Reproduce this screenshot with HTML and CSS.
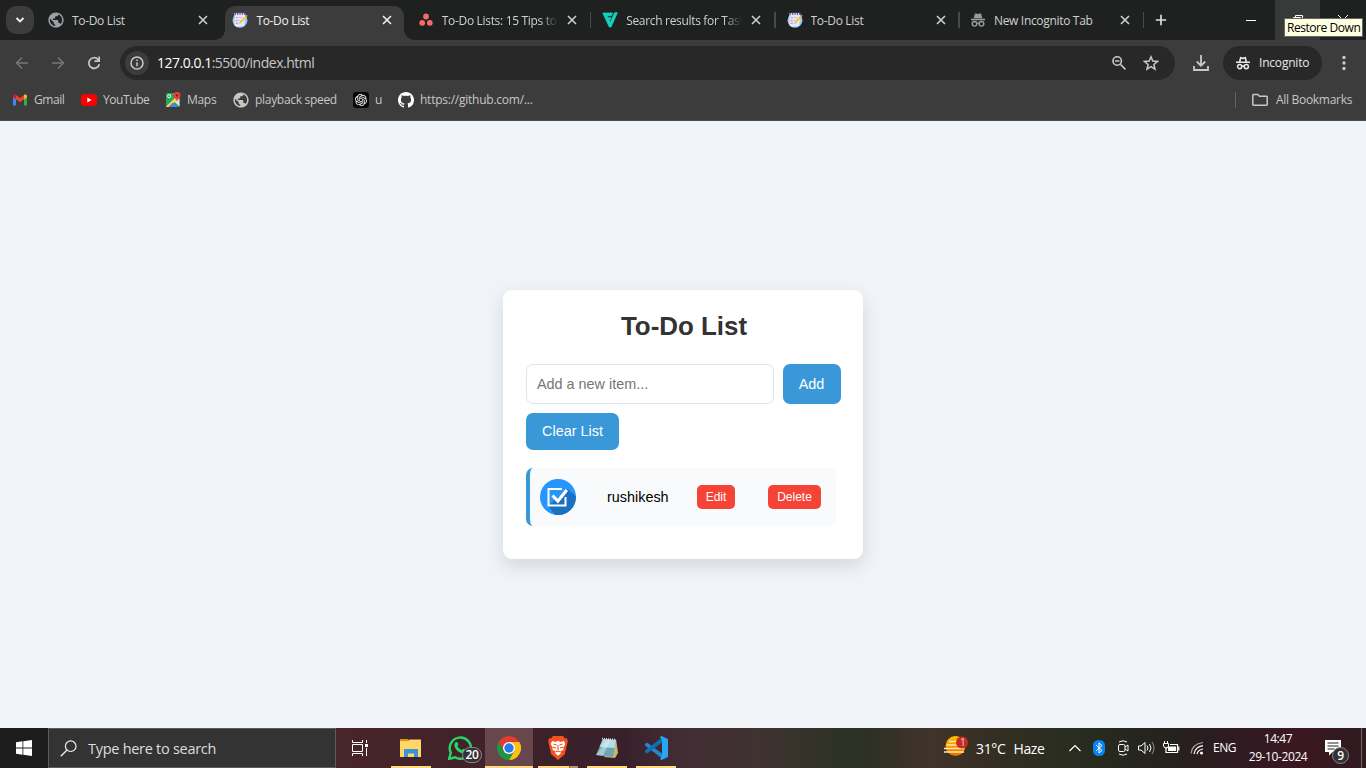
FILE: index.html
```html
<!DOCTYPE html>
<html lang="en">
<head>
<meta charset="utf-8">
<title>To-Do List</title>
<link rel="stylesheet" href="styles.css">
</head>
<body>
<svg class="defs" width="0" height="0">
  <symbol id="x" viewBox="0 0 10 10"><path d="M1 1l8 8M9 1L1 9" stroke="currentColor" stroke-width="1.600" fill="none"/></symbol>
  <symbol id="globe" viewBox="1.500 1.500 21 21"><path fill="currentColor" d="M12 2C6.480 2 2 6.480 2 12s4.480 10 10 10 10-4.480 10-10S17.520 2 12 2zm-1 17.930c-3.950-.49-7-3.850-7-7.930 0-.62.08-1.210.21-1.790L9 15v1c0 1.100.9 2 2 2v1.930zm6.900-2.540c-.26-.81-1-1.390-1.900-1.390h-1v-3c0-.55-.45-1-1-1H8v-2h2c.55 0 1-.45 1-1V7h2c1.100 0 2-.9 2-2v-.41c2.930 1.190 5 4.060 5 7.410 0 2.080-.8 3.970-2.100 5.390z"/></symbol>
  <symbol id="todo" viewBox="0 0 17 17"><circle cx="8.500" cy="8.800" r="7.900" fill="#8fd0fb"/><path d="M3 2h11l-1 12.500L5 16 2.500 14z" fill="#e6e8fb"/><path d="M2.500 1h11.500v2.500H2.500z" fill="#dcdcfa"/><path d="M3.500 0v3M6 0v3M8.500 0v3M11 0v3M13.500 0v3" stroke="#4c3a68" stroke-width="1.100"/><path d="M4 6h2M4 9h2M4 12h2" stroke="#f78ba8" stroke-width="1.500"/><path d="M7 6h4M7 9h2M7 12h2" stroke="#b8bce8"/><path d="M8.500 11.500L15.500 4" stroke="#ffbd20" stroke-width="1.800"/><path d="M14.800 4.700l1.300-1.400" stroke="#ef6d74" stroke-width="1.800"/></symbol>
  <symbol id="spy" viewBox="0 0 16 16"><path d="M5 1.500h1.500L8 2l1.500-.5H11l1.300 4.700H3.700z" fill="currentColor"/><path d="M1 7.500h14" stroke="currentColor" stroke-width="1.600"/><g fill="none" stroke="currentColor" stroke-width="1.400"><circle cx="4.500" cy="11.800" r="2.300"/><circle cx="11.500" cy="11.800" r="2.300"/><path d="M6.800 11.500q1.200-.7 2.400 0"/></g></symbol>
  <symbol id="spyline" viewBox="0 0 16 16"><path d="M4.600 7L5.700 2.700l2.300.6 2.300-.6L11.400 7M1 7.300h14" fill="none" stroke="currentColor" stroke-width="1.600"/><g fill="none" stroke="currentColor" stroke-width="1.500"><circle cx="4.700" cy="11.600" r="2.100"/><circle cx="11.300" cy="11.600" r="2.100"/><path d="M6.800 11.400q1.200-.7 2.400 0"/></g></symbol>
</svg>

<header class="tabstrip">
  <button class="tab-search"><svg width="10" height="10" viewBox="0 0 10 10"><path d="M1.500 3L5 6.500 8.500 3" fill="none" stroke="currentColor" stroke-width="1.900"/></svg></button>
  <nav class="tabs">
    <div class="tab"><svg class="fav dim" viewBox="0 0 16 16"><use href="#globe"/></svg><span class="title">To-Do List</span><svg class="close"><use href="#x"/></svg></div>
    <div class="tab active"><svg class="fav"><use href="#todo"/></svg><span class="title">To-Do List</span><svg class="close"><use href="#x"/></svg></div>
    <div class="tab sep"><svg class="fav asana" viewBox="0 0 16 16"><g fill="#f76969"><circle cx="8" cy="4.500" r="2.900"/><circle cx="4.200" cy="10.800" r="2.900"/><circle cx="11.800" cy="10.800" r="2.900"/></g></svg><span class="title fade tips">To-Do Lists: 15 Tips to</span><svg class="close"><use href="#x"/></svg></div>
    <div class="tab sep"><svg class="fav asana" viewBox="0 0 16 16"><path d="M.8 1h9.700L9.400 3.800H5l1 2h3L8.200 8H7l1.300 2.600L12.500.8h2.900L9 15H7.300z" fill="#13d3bd" stroke="#13d3bd" stroke-width=".8" stroke-linejoin="round"/></svg><span class="title fade">Search results for Task</span><svg class="close"><use href="#x"/></svg></div>
    <div class="tab sep"><svg class="fav asana"><use href="#todo"/></svg><span class="title">To-Do List</span><svg class="close"><use href="#x"/></svg></div>
    <div class="tab sep"><svg class="fav spytab"><use href="#spy"/></svg><span class="title incog">New Incognito Tab</span><svg class="close"><use href="#x"/></svg></div>
  </nav>
  <svg class="plus" width="12" height="12" viewBox="0 0 12 12"><path d="M6 .8v10.400M.8 6h10.400" stroke="currentColor" stroke-width="1.700"/></svg>
  <div class="winctl">
    <span><svg width="10" height="10" viewBox="0 0 10 10"><path d="M0 5.500h10" stroke="#fff"/></svg></span>
    <span class="hover"><svg width="10" height="10" viewBox="0 0 10 10"><path d="M.5 2.500h7v7h-7zM2.500 2V.5h7v7H8" fill="none" stroke="#fff"/></svg></span>
    <span><svg width="10" height="10" viewBox="0 0 10 10"><path d="M0 0l10 10M10 0L0 10" stroke="#fff"/></svg></span>
  </div>
  <div class="tooltip">Restore Down</div>
</header>

<div class="toolbar">
  <svg class="nav off" viewBox="0 0 16 16"><path d="M14 8H3M8 2.500L2.500 8 8 13.500" fill="none" stroke="currentColor" stroke-width="1.500"/></svg>
  <svg class="nav off" viewBox="0 0 16 16"><path d="M2 8h11M8 2.500L13.500 8 8 13.500" fill="none" stroke="currentColor" stroke-width="1.500"/></svg>
  <svg class="nav" viewBox="0 0 16 16"><path d="M13.300 9.200A5.300 5.300 0 1 1 12 4.400L13.500 6" fill="none" stroke="currentColor" stroke-width="1.700"/><path d="M14 1.500V7H8.500V5.300h3.800V1.500z" fill="currentColor"/></svg>
  <div class="omnibox">
    <span class="info"><svg width="14" height="14" viewBox="0 0 14 14"><circle cx="7" cy="7" r="6" fill="none" stroke="currentColor" stroke-width="1.500"/><path d="M7 6.200v4M7 3.500v1.500" stroke="currentColor" stroke-width="1.500"/></svg></span>
    <span class="url"><b>127.0.0.1</b>:5500/index.html</span>
    <svg class="mag" width="16" height="16" viewBox="0 0 16 16"><g fill="none" stroke="currentColor" stroke-width="1.600"><circle cx="6.200" cy="6" r="4.200"/><path d="M4 6h4.400M9.300 9.200l5.200 5.200"/></g></svg>
    <svg class="star" width="16" height="16" viewBox="0 0 16 16"><path d="M8 1.800l1.800 4.300 4.700.4-3.600 3 1.100 4.600L8 11.700l-4 2.400 1.100-4.600-3.600-3 4.700-.4z" fill="none" stroke="currentColor" stroke-width="1.500"/></svg>
  </div>
  <svg class="down" width="18" height="18" viewBox="0 0 18 18"><path d="M9 1v10.500M4.800 7.500L9 11.700l4.200-4.200M2 12v4h14v-4" fill="none" stroke="currentColor" stroke-width="1.800"/></svg>
  <div class="chip"><svg width="16" height="16"><use href="#spyline"/></svg><span>Incognito</span></div>
  <svg class="dots" width="4" height="16" viewBox="0 0 4 16"><g fill="currentColor"><circle cx="2" cy="2.500" r="1.700"/><circle cx="2" cy="8" r="1.700"/><circle cx="2" cy="13.500" r="1.700"/></g></svg>
</div>

<div class="bookmarks">
  <a class="gmail"><svg viewBox="0 0 16 16"><path d="M1 4v9.500h3V6.500z" fill="#4285f4"/><path d="M15 4v9.500h-3V6.500z" fill="#34a853"/><path d="M1 4.500C1 2.500 3 2 4 3v4.500L1 5.300z" fill="#c5221f"/><path d="M4 3l4 3 4-3v4.300l-4 3-4-3z" fill="#ea4335"/><path d="M12 3c1-1 3-.5 3 1.500v.8l-3 2.200z" fill="#fbbc04"/></svg><span>Gmail</span></a>
  <a class="yt"><svg viewBox="0 0 16 16"><rect y="2.300" width="16" height="11.400" rx="3" fill="#f00"/><path d="M6.300 5.500v5l4.300-2.500z" fill="#fff"/></svg><span>YouTube</span></a>
  <a class="maps"><svg viewBox="0 0 16 16"><rect x="1" y="1" width="13.500" height="14" rx="1" fill="#26a65b"/><path d="M8 8.500l6.500 6V7z" fill="#dfe3e8"/><path d="M1 14.500L14 2v4L5 15H1z" fill="#fbd24a"/><path d="M3.500 15L8 10.500l4.800 4.500z" fill="#4285f4"/><circle cx="4.200" cy="4.200" r="1.600" fill="none" stroke="#fff"/><path d="M12 0a3.500 3.500 0 0 1 3.500 3.500C15.500 6 12.500 6.500 12 10c-.5-3.500-3.500-4-3.500-6.500A3.500 3.500 0 0 1 12 0z" fill="#ea4335"/><circle cx="12" cy="3.500" r="1.200" fill="#8d1c16"/></svg><span>Maps</span></a>
  <a class="play"><svg viewBox="0 0 16 16"><use href="#globe"/></svg><span>playback speed</span></a>
  <a class="gpt"><svg viewBox="0 0 16 16"><rect width="16" height="16" rx="3" fill="#080808"/><path transform="translate(2 2) scale(.5)" fill="#f0f0f0" stroke="#f0f0f0" stroke-width=".3" d="M22.2819 9.8211a5.9847 5.9847 0 0 0-.5157-4.9108 6.0462 6.0462 0 0 0-6.5098-2.9A6.0651 6.0651 0 0 0 4.9807 4.1818a5.9847 5.9847 0 0 0-3.9977 2.9 6.0462 6.0462 0 0 0 .7427 7.0966 5.98 5.98 0 0 0 .511 4.9107 6.051 6.051 0 0 0 6.5146 2.9001A5.9847 5.9847 0 0 0 13.2599 24a6.0557 6.0557 0 0 0 5.7718-4.2058 5.9894 5.9894 0 0 0 3.9977-2.9001 6.0557 6.0557 0 0 0-.7475-7.0729zm-9.022 12.6081a4.4755 4.4755 0 0 1-2.8764-1.0408l.1419-.0804 4.7783-2.7582a.7948.7948 0 0 0 .3927-.6813v-6.7369l2.02 1.1686a.071.071 0 0 1 .038.052v5.5826a4.504 4.504 0 0 1-4.4945 4.4944zm-9.6607-4.1254a4.4708 4.4708 0 0 1-.5346-3.0137l.142.0852 4.783 2.7582a.7712.7712 0 0 0 .7806 0l5.8428-3.3685v2.3324a.0804.0804 0 0 1-.0332.0615L9.74 19.9502a4.4992 4.4992 0 0 1-6.1408-1.6464zM2.3408 7.8956a4.485 4.485 0 0 1 2.3655-1.9728V11.6a.7664.7664 0 0 0 .3879.6765l5.8144 3.3543-2.0201 1.1685a.0757.0757 0 0 1-.071 0l-4.8303-2.7865A4.504 4.504 0 0 1 2.3408 7.872zm16.5963 3.8558L13.1038 8.364 15.1192 7.2a.0757.0757 0 0 1 .071 0l4.8303 2.7913a4.4944 4.4944 0 0 1-.6765 8.1042v-5.6772a.79.79 0 0 0-.407-.667zm2.0107-3.0231l-.142-.0852-4.7735-2.7818a.7759.7759 0 0 0-.7854 0L9.409 9.2297V6.8974a.0662.0662 0 0 1 .0284-.0615l4.8303-2.7866a4.4992 4.4992 0 0 1 6.6802 4.66zM8.3065 12.863l-2.02-1.1638a.0804.0804 0 0 1-.038-.0567V6.0742a4.4992 4.4992 0 0 1 7.3757-3.4537l-.142.0805L8.704 5.459a.7948.7948 0 0 0-.3927.6813zm1.0976-2.3654l2.602-1.4998 2.6069 1.4998v2.9994l-2.5974 1.4997-2.6067-1.4997Z"/></svg><span>u</span></a>
  <a class="gh"><svg viewBox="0 0 16 16"><path fill="#fff" d="M8 0C3.580 0 0 3.580 0 8c0 3.540 2.290 6.530 5.470 7.590.4.070.55-.17.55-.38 0-.19-.01-.82-.01-1.490-2.010.37-2.530-.49-2.690-.94-.09-.23-.48-.94-.82-1.130-.28-.15-.68-.52-.01-.53.63-.01 1.080.58 1.230.82.72 1.210 1.870.87 2.330.66.07-.52.28-.87.51-1.070-1.780-.2-3.640-.89-3.640-3.950 0-.87.31-1.590.82-2.150-.08-.2-.36-1.020.08-2.120 0 0 .67-.21 2.200.82.64-.18 1.320-.27 2-.27s1.360.09 2 .27c1.530-1.040 2.200-.82 2.200-.82.44 1.100.16 1.920.08 2.120.51.56.82 1.270.82 2.150 0 3.070-1.870 3.750-3.650 3.950.29.25.54.73.54 1.480 0 1.070-.01 1.930-.01 2.200 0 .21.15.46.55.38A8.010 8.010 0 0 0 16 8c0-4.420-3.580-8-8-8z"/></svg><span>https://github.com/...</span></a>
  <i class="rule"></i>
  <a class="all"><svg viewBox="0 0 16 16"><path d="M.8 12.500v-9.300q0-.7.700-.7h4.300l1.700 1.700h7q.7 0 .7.700v7.600q0 .7-.7.700h-13q-.7 0-.7-.7z" fill="none" stroke="currentColor" stroke-width="1.500"/></svg><span>All Bookmarks</span></a>
</div>

<main class="page">
  <section class="card">
    <h1>To-Do List</h1>
    <div class="entry"><input type="text" placeholder="Add a new item..."><button class="blue">Add</button></div>
    <button class="blue clear">Clear List</button>
    <div class="item">
      <svg width="36" height="36" viewBox="0 0 36 36"><circle cx="18" cy="18" r="18" fill="#2796fc"/><path d="M8 27l7.500 8.900A18 18 0 0 0 35.900 17L27.500 10z" fill="#1b70bf"/><path d="M22 10H8.500v16.500h17V18" fill="none" stroke="#fff" stroke-width="2"/><path d="M12.500 16.500l5.300 5.500 9-11" fill="none" stroke="#fff" stroke-width="3.200"/></svg>
      <span class="task">rushikesh</span>
      <button class="red edit">Edit</button>
      <button class="red">Delete</button>
    </div>
  </section>
</main>

<footer class="taskbar">
  <div class="start"><svg width="16" height="16" viewBox="0 0 16 16"><path d="M0 2.200L6.500 1.300v6.300H0zM7.300 1.200L16 0v7.600H7.300zM0 8.400h6.500v6.300L0 13.800zM7.300 8.400H16V16l-8.700-1.200z" fill="#fff"/></svg></div>
  <div class="search"><svg width="17" height="17" viewBox="0 0 17 17"><circle cx="10.700" cy="6.200" r="5.300" fill="none" stroke="#eee" stroke-width="1.200"/><path d="M7 10L.8 16.200" stroke="#eee" stroke-width="1.300"/></svg><span>Type here to search</span></div>
  <div class="apps">
    <div class="app view"><svg width="16" height="16" viewBox="0 0 16 16"><path d="M.5 0v2.500h10V0M.5 16v-2.500h10V16M.5 4.500h10v7H.5zM14.500 0v3M14.500 8v8" fill="none" stroke="#fff"/><path d="M13 4h3v3h-3z" fill="#fff"/></svg></div>
    <div class="app run"><svg width="24" height="24" viewBox="0 0 24 24"><path d="M1 3h8l2 2h-10z" fill="#d99a13"/><path d="M1 5h8l2-1.500h11V21H1z" fill="#ffd667"/><path d="M5 21v-8h14v8h-4v-3.500H9V21z" fill="#3b93dc"/></svg></div>
    <div class="app"><svg width="24" height="24" viewBox="0 0 24 24"><path d="M1 23l1.800-6.200A10.600 10.600 0 1 1 7 21.300z" fill="none" stroke="#27d468" stroke-width="2.400"/><path d="M8 6c1.500-.5 2 1.200 2.300 2.200.3.800-.7 1.200-.9 1.800.8 1.800 2.200 3.200 4.200 4 .8.200 1.300-1.400 2-1.200 1.200.5 2.700.9 2.300 2-.6 2-2.700 2.700-4.700 2.100C10 16 6.500 12.500 6.300 9c0-1 .6-2.500 1.700-3z" fill="#27d468"/></svg><span class="badge">20</span></div>
    <div class="app chrome run"><svg width="24" height="24" viewBox="0 0 24 24"><path d="M12 0a12 12 0 0 1 10.400 6H12L6.800 15 1.600 6A12 12 0 0 1 12 0z" fill="#e33b2e"/><path d="M22.400 6A12 12 0 0 1 12 24l5.200-9L12 6z" fill="#fbc116"/><path d="M1.600 6A12 12 0 0 0 12 24l5.200-9H6.800z" fill="#229342"/><circle cx="12" cy="12" r="6" fill="#fff"/><circle cx="12" cy="12" r="4.700" fill="#267aee"/></svg></div>
    <div class="app run multi"><svg width="20" height="24" viewBox="0 0 20 24"><path d="M5 0h10l2 2.500 2-.2.800 3.500-.8 3-2.200 9.500L10 24l-6.800-5.700L1 8.800l-.8-3L1 2.300l2 .2z" fill="#f7501d"/><path d="M4 5l3.500 1L10 4.800l2.500 1.200L16 5l1.200 3-2 4 .3 2-3 1.200.5 2-3 2.500-3-2.500.5-2-3-1.200.3-2-2-4z" fill="#fff"/><path d="M5.500 8l3 1M14.500 8l-3 1M10 9v5M7.500 16l2.500-1 2.500 1M5 11l3 1M15 11l-3 1" stroke="#f7501d" stroke-width="1.100" fill="none"/></svg></div>
    <div class="app run"><svg width="24" height="24" viewBox="0 0 24 24"><path d="M21 3l2 14-3 5-11-1z" fill="#d1b36e"/><path d="M8 3l13 1-3 17L1 19z" fill="#6ca6b5"/><path d="M8 3l13 1-1.300 8L4.500 11z" fill="#b3dce4"/><path d="M1 19l12-16 3 .5L8 20z" fill="#e1f3f4" opacity=".45"/><path d="M7 2.500l14 1" stroke="#ddd" stroke-width="1.500" stroke-dasharray="1 1"/></svg></div>
    <div class="app run"><svg width="24" height="24" viewBox="0 0 24 24"><path d="M1 8l2-1.500L18 17.500v5L1 9.500z" fill="#2489ca"/><path d="M1 16l2 1.500L18 6.500v-5L1 14.500z" fill="#1070b3"/><path d="M17.500 0L24 3v18l-6.500 3-1.500-1 2-2V4l-2-3z" fill="#29a5f3"/></svg></div>
  </div>
  <div class="weather"><svg width="26" height="24" viewBox="0 0 26 24"><defs><linearGradient id="sun" x2="0" y2="1"><stop stop-color="#ffc400"/><stop offset="1" stop-color="#ee6c00"/></linearGradient></defs><circle cx="12.500" cy="10" r="10" fill="url(#sun)"/><path d="M6 5.500h9M3.500 9h18M1 12.500h20M1 16h20" stroke="#ffe5ae" stroke-width="1.700"/><circle cx="19" cy="6.500" r="6" fill="#c72c21"/></svg><em>1</em><span class="temp">31°C</span><span>Haze</span></div>
  <div class="tray">
    <svg class="up" width="12" height="8" viewBox="0 0 12 8"><path d="M.5 7L6 1.500 11.500 7" fill="none" stroke="#fff" stroke-width="1.200"/></svg>
    <svg class="bt" width="12" height="16" viewBox="0 0 12 16"><rect width="12" height="16" rx="5.500" fill="#0a84f3"/><path d="M3 5l6 5.500L6 13V3l3 2.500L3 11" fill="none" stroke="#fff"/></svg>
    <svg class="meet" width="12" height="16" viewBox="0 0 12 16"><g fill="none" stroke="#fff"><rect x="1.500" y="4.500" width="6.500" height="7" rx="1.500"/><path d="M8 7l3-2v6l-3-2M2 2q4-2.500 8 0M2 14q4 2.500 8 0"/></g></svg>
    <svg class="vol" width="17" height="14" viewBox="0 0 17 14"><g fill="none" stroke="#fff"><path d="M.5 5v4h2.500l4 3.500v-11L3 5zM9 4.500q2 2.500 0 5M11.500 3q3 4 0 8"/><path d="M14 1q4 6 0 12" opacity=".5"/></g></svg>
    <svg class="bat" width="17" height="14" viewBox="0 0 17 14"><path d="M1.500 0v3M4.500 0v3" stroke="#fff"/><path d="M.5 2.500h5V5L4 7H2L.5 5z" fill="none" stroke="#fff"/><path d="M3 6v5.500h11.500v-8H7M15.800 5.500v4" fill="none" stroke="#fff" stroke-width="1.200"/><path d="M5 5.500h8v4.500H5z" fill="#fff"/></svg>
    <svg class="wifi" width="14" height="14" viewBox="0 0 14 14"><g fill="none" stroke="#fff" stroke-width="1.200"><path d="M1 12.500Q2 3 13 1.500" opacity=".6"/><path d="M4 13Q5 6 13 4.700M7 13.200q.8-4.500 6-5.200"/></g><circle cx="11.500" cy="12" r="1.500" fill="#fff"/></svg>
    <span class="lang">ENG</span>
    <div class="clock"><span>14:47</span><span>29-10-2024</span></div>
    <div class="note"><svg width="16" height="16" viewBox="0 0 16 16"><path d="M0 0h16v12H7.500L4 15.500V12H0z" fill="#fff"/><path d="M2.500 3h11M2.500 6h11M2.500 9h7" stroke="#242021"/></svg><span class="badge nine">9</span></div>
    <i class="peek"></i>
  </div>
</footer>
</body>
</html>
```

FILE: styles.css
```css
* { box-sizing: border-box; }
body { margin: 0; width: 1366px; height: 768px; overflow: hidden; display: flex; flex-direction: column; font: 12px/16px "Open Sans", "Noto Sans", sans-serif; background: #f0f4f8; }
button, input { font-family: inherit; border: 0; padding: 0; }
svg { flex: none; display: block; }
.defs { position: absolute; }

.tabstrip { height: 40px; background: #1f2120; display: flex; align-items: center; position: relative; color: #dedede; flex: none; }
.tab-search { margin-left: 6px; width: 28px; height: 28px; border-radius: 10px; background: #3c3c3c; color: #eee; display: grid; place-items: center; }
.tabs { display: flex; margin-left: 4px; height: 40px; }
.tab { width: 184.400px; height: 40px; display: flex; align-items: center; position: relative; padding-left: 10px; color: #cfd0cf; }
.fav { width: 16px; height: 16px; margin-right: 8px; }
.asana { margin-left: 1px; }
.dim { color: #9aa0a6; }
.spytab { color: #9b9b9b; }
.title { width: 119px; overflow: hidden; white-space: nowrap; letter-spacing: -.32px; padding-top: 1px; }
.title.tips { letter-spacing: -.32px; }
.title.incog { letter-spacing: -.32px; }
.fade { width: 116px; margin-right: 3px; -webkit-mask-image: linear-gradient(90deg, #000 85%, transparent); mask-image: linear-gradient(90deg, #000 85%, transparent); }
.close { width: 10px; height: 10px; margin-left: 7px; }
.asana ~ .close { margin-left: 6px; }
.sep::after { content: ""; position: absolute; right: 0; top: 12px; width: 1.500px; height: 16px; background: #494a49; }
.active { color: #f1f1f1; }
.active::before { content: ""; position: absolute; z-index: 0; left: 2.500px; right: 3px; top: 6px; bottom: 0; background: #3c3c3c; border-radius: 10px 10px 0 0; }
.active > * { position: relative; z-index: 1; }
.active::after { content: ""; position: absolute; left: -7.500px; right: -7px; bottom: 0; height: 10px; background: radial-gradient(circle at 0 0, transparent 9.500px, #3c3c3c 10px) left / 10px 10px no-repeat, radial-gradient(circle at 100% 0, transparent 9.500px, #3c3c3c 10px) right / 10px 10px no-repeat; }
.plus { margin-left: 10.600px; }
.winctl { display: flex; height: 40px; margin-left: auto; }
.winctl span { width: 46px; display: grid; place-items: center; }
.winctl span:first-child { padding-right: 2px; }
.winctl .hover { background: #383939; width: 45px; }
.tooltip { position: absolute; left: 1284px; top: 18px; width: 79px; height: 19px; background: #ffffe1; border: 1px solid #666; color: #000; line-height: 18px; padding-left: 2px; white-space: nowrap; letter-spacing: -.45px; }

.toolbar { height: 40px; background: #3c3c3c; display: flex; align-items: center; padding: 6px 0 0 14px; color: #c9c9c9; flex: none; }
.nav { width: 16px; height: 16px; margin-right: 20px; }
.nav:nth-child(3) { margin-right: 18px; }
.off { color: #777; }
.omnibox { width: 1055px; height: 34px; border-radius: 17px; background: #282828; display: flex; align-items: center; padding: 0 16px 0 5px; }
.info { width: 24px; height: 24px; border-radius: 50%; background: #3c3c3c; display: grid; place-items: center; margin-right: 8px; }
.url { font-size: 14px; line-height: 20px; color: #c7c7c7; letter-spacing: -.49px; flex: 1; }
.url b { font-weight: 400; color: #fff; }
.mag { margin-right: 16px; }
.down { margin-left: 17px; }
.chip { width: 99px; height: 34px; border-radius: 17px; background: #282828; margin-left: 13px; padding-left: 12px; display: flex; align-items: center; gap: 8px; color: #e8e8e8; letter-spacing: -.2px; }
.dots { margin-left: 20px; }

.bookmarks { height: 41px; background: #3c3c3c; display: flex; align-items: center; padding: 0 14px 1px 12px; color: #c7c7c7; border-bottom: 1px solid #4b4b4b; flex: none; }
.bookmarks a { display: flex; align-items: center; gap: 6px; white-space: nowrap; letter-spacing: -.3px; height: 16px; }
.bookmarks span { padding-top: 1px; }
.bookmarks svg { width: 16px; height: 16px; }
.bookmarks .gmail, .bookmarks .yt { letter-spacing: -.42px; }
.gmail { width: 69px; }
.yt { width: 84px; }
.maps { width: 68px; }
.play { width: 120px; }
.gpt { width: 45px; }
.bookmarks .gh { letter-spacing: -.24px; }
.rule { width: 1.500px; height: 16px; background: #636363; margin-left: auto; margin-right: 16px; }
.all { width: 100px; }
.bookmarks .all { gap: 8px; }

.page { flex: 1; background: #f0f4f8; display: flex; justify-content: center; align-items: flex-start; padding-top: 169px; font-family: "Liberation Sans", Arial, sans-serif; }
.card { width: 360px; height: 269px; border-radius: 9px; background: #fff; box-shadow: 0 7px 18px rgba(0, 0, 0, .12); padding: 21px 22px 0 23px; }
h1 { margin: 0 0 23px; font-size: 25.920px; line-height: 30px; color: #333; text-align: center; padding-left: 1px; }
.entry { display: flex; gap: 9px; height: 40px; }
input { width: 248px; border: 1px solid #dfe3e9; border-radius: 7px; padding: 0 10px; font-size: 14.400px; }
input::placeholder { color: #757575; }
.blue { background: #3a98d9; color: #fff; border-radius: 7px; font-size: 14.400px; width: 58px; height: 40px; padding-right: 1px; }
.clear { display: block; width: 93px; height: 37px; margin-top: 9px; padding: 0 0 2px; }
.item { width: 310px; height: 58px; margin-top: 18px; border-left: 4px solid #3a98d9; border-radius: 7px; background: #f9fafc; display: flex; align-items: center; padding-left: 10px; }
.task { width: 90px; margin-left: 31px; font-size: 14.400px; color: #000; }
.red { width: 53px; height: 24px; border-radius: 5px; background: #f54336; color: #fff; font-size: 12px; }
.edit { width: 38px; margin-right: 33px; }

.taskbar { height: 40px; flex: none; display: flex; color: #fff; background: linear-gradient(90deg, #482529 336px, #40222a 480px, #38202b 620px, #432e36 690px, #3e332f 770px, #2d3126 840px, #2e3025 870px, #40332a 930px, #332d22 1000px, #2a2e20 1060px, #24231d 1160px, #2c1b20 1220px, #3b1722 1300px, #2e1a1f 1366px); }
.start { width: 48px; background: #1d1d1d; display: grid; place-items: center; }
.search { width: 288px; background: #333; border: 1px solid #5d5d5d; display: flex; align-items: center; padding-left: 11px; gap: 11px; font-size: 14.500px; color: #dedede; letter-spacing: -.28px; }
.search span { padding-top: 2px; }
.apps { display: flex; width: 600px; }
.app { width: 49px; height: 40px; display: grid; place-items: center; position: relative; }
.view { padding-right: 2px; }
.app:nth-child(2) { margin-left: 1px; }
.run::after { content: ""; position: absolute; left: 5px; right: 4px; bottom: 0; height: 2px; background: #ffd77e; }
.chrome { background: #67464c; width: 48px; margin: 0 0 0 1px; }
.chrome::after { left: 0; right: 0; }
.multi::after { background: linear-gradient(90deg, #ffd77e 78%, #8b764f 78% 81%, #b7965f 81%); }
.badge { position: absolute; left: 27px; top: 19px; width: 20px; height: 16px; border: 1px solid #888; border-radius: 9px; background: #343035; font-size: 12px; line-height: 14px; font-weight: 600; text-align: center; letter-spacing: -.3px; }
.weather { display: flex; align-items: center; position: relative; padding-left: 7px; font-size: 14px; letter-spacing: -.35px; width: 132px; white-space: nowrap; }
.weather span { padding-top: 1px; }
.weather em { position: absolute; left: 24px; top: 8px; font: 10px/13px "Open Sans", sans-serif; color: #f6caca; }
.weather .temp { margin: 0 8px 0 7px; }
.tray { display: flex; align-items: center; width: 298px; }
.up { margin-left: 1px; }
.bt { margin-left: 12px; }
.meet { margin-left: 12px; }
.vol { margin-left: 9px; }
.bat { margin-left: 8px; }
.wifi { margin-left: 10px; }
.lang { margin-left: 9px; width: 24px; letter-spacing: -.45px; }
.clock { display: flex; flex-direction: column; align-items: center; width: 60px; margin-left: 11px; line-height: 18px; letter-spacing: -.4px; white-space: nowrap; }
.note { margin-left: 17px; position: relative; }
.nine { left: 7px; top: 7px; width: 17px; height: 17px; line-height: 15px; }
.peek { width: 1px; height: 40px; background: #766467; margin-left: auto; margin-right: 4px; }
```
